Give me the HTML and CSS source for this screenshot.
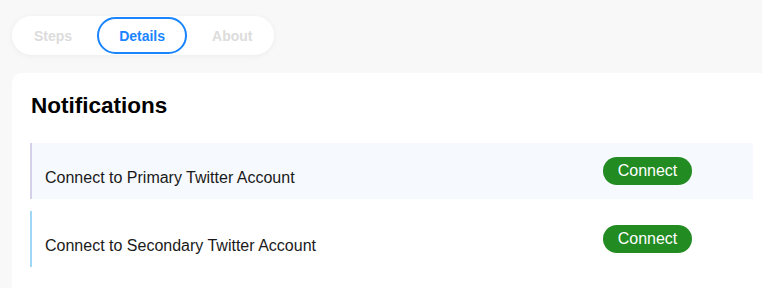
FILE: index.html
```html
<!DOCTYPE html>
<html>
<head>
<meta charset="utf-8">
<link rel="stylesheet" href="styles.css">
</head>
<body>
<div class="page">
  <nav class="tabs">
    <button class="tab">Steps</button>
    <button class="tab active">Details</button>
    <button class="tab">About</button>
  </nav>
  <section class="card">
    <h2 class="title">Notifications</h2>
    <div class="rows">
      <div class="row row-primary">
        <span class="label">Connect to Primary Twitter Account</span>
        <button class="connect">Connect</button>
      </div>
      <div class="row row-secondary">
        <span class="label">Connect to Secondary Twitter Account</span>
        <button class="connect">Connect</button>
      </div>
    </div>
  </section>
</div>
</body>
</html>
```

FILE: styles.css
```css
html, body {
  margin: 0;
  padding: 0;
  background: #f8f8f8;
  overflow: hidden;
  height: 288px;
  font-family: "Liberation Sans", Arial, sans-serif;
}

.page {
  padding: 16px 0 0 12px;
  width: 780px;
}

.tabs {
  display: inline-flex;
  gap: 3px;
  background: #ffffff;
  border-radius: 20px;
  padding: 1px 0;
  box-shadow: 0 1px 6px rgba(0, 0, 0, 0.05);
}

.tab {
  font-family: "Liberation Sans", Arial, sans-serif;
  font-weight: bold;
  font-size: 14px;
  color: #dcdcdc;
  background: transparent;
  border: 2px solid transparent;
  border-radius: 19px;
  height: 37px;
  padding: 0 20px;
  cursor: pointer;
}

.tab.active {
  color: #1a85ff;
  border-color: #1a85ff;
}

.card {
  margin-top: 18px;
  background: #ffffff;
  border-radius: 10px 10px 0 0;
  padding: 20px 18px 24px 18px;
  width: 723px;
}

.title {
  margin: 0 0 0 1px;
  font-size: 22.5px;
  font-weight: bold;
  color: #000000;
}

.rows {
  display: flex;
  flex-direction: column;
  gap: 12px;
  margin-top: 24px;
}

.row {
  display: flex;
  align-items: center;
  justify-content: space-between;
  height: 56px;
  box-sizing: border-box;
  padding: 0 61px 0 13px;
  border-left: 2px solid #d4d2e8;
}

.row-primary {
  background: #f6f9fd;
}

.row-secondary {
  background: #ffffff;
  border-left-color: #9ed8f6;
}

.label {
  font-size: 16px;
  color: #1a1a1a;
  margin-top: 13px;
}

.connect {
  font-family: "Liberation Sans", Arial, sans-serif;
  font-size: 16px;
  color: #ffffff;
  background: #228b22;
  border: none;
  border-radius: 14px;
  width: 89px;
  height: 28px;
  padding: 0;
  cursor: pointer;
}
```
